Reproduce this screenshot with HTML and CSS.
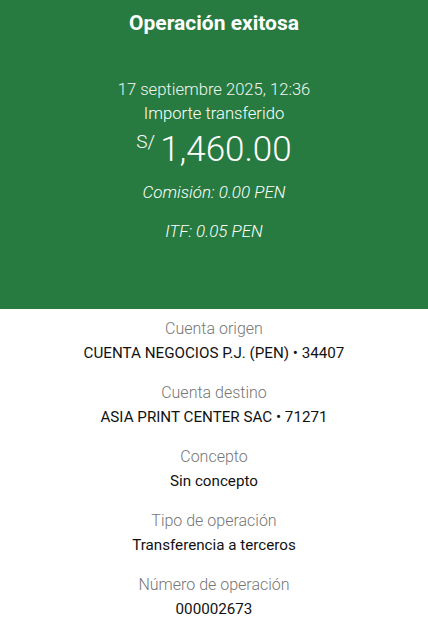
FILE: index.html
```html
<!DOCTYPE html>
<html lang="es">
<head>
<meta charset="utf-8">
<title>Operación exitosa</title>
<link rel="stylesheet" href="styles.css">
</head>
<body>
<header class="hero">
  <h1 class="title">Operación exitosa</h1>
  <p class="date">17 septiembre 2025, 12:36</p>
  <p class="caption">Importe transferido</p>
  <p class="amount"><span class="currency">S/</span><span class="value">1,460.00</span></p>
  <p class="fee">Comisión: 0.00 PEN</p>
  <p class="fee itf">ITF: 0.05 PEN</p>
</header>
<main class="details">
  <div class="item"><div class="label">Cuenta origen</div><div class="val">CUENTA NEGOCIOS P.J. (PEN) • 34407</div></div>
  <div class="item"><div class="label">Cuenta destino</div><div class="val">ASIA PRINT CENTER SAC • 71271</div></div>
  <div class="item"><div class="label">Concepto</div><div class="val">Sin concepto</div></div>
  <div class="item"><div class="label">Tipo de operación</div><div class="val">Transferencia a terceros</div></div>
  <div class="item"><div class="label">Número de operación</div><div class="val">000002673</div></div>
</main>
</body>
</html>
```
FILE: styles.css
```css
html, body {
  margin: 0;
  padding: 0;
  background: #ffffff;
  font-family: Roboto, "Liberation Sans", sans-serif;
}
.hero {
  background: #277b40;
  color: #ffffff;
  height: 309px;
  box-sizing: border-box;
  padding-top: 11px;
  text-align: center;
}
.hero p { margin: 0; }
.title {
  margin: 0;
  font-size: 21px;
  line-height: 24px;
  font-weight: 700;
}
.date {
  margin-top: 43px !important;
  font-size: 16.6px;
  line-height: 24px;
  font-weight: 300;
  color: #f1f6f2;
}
.caption {
  font-size: 16.6px;
  line-height: 24px;
  font-weight: 300;
}
.amount {
  display: flex;
  justify-content: center;
  align-items: flex-start;
  height: 40px;
  margin-top: 4px !important;
  font-weight: 300;
}
.currency {
  font-size: 19px;
  line-height: 24px;
  margin-right: 5px;
}
.value {
  font-size: 35px;
  line-height: 40px;
}
.fee {
  margin-top: 10px !important;
  font-size: 17px;
  line-height: 24px;
  font-style: italic;
  font-weight: 300;
}
.itf { margin-top: 15px !important; }
.details {
  padding-top: 8px;
  text-align: center;
  display: flex;
  flex-direction: column;
  gap: 16px;
}
.label {
  font-size: 16px;
  line-height: 24px;
  color: #767676;
  font-weight: 300;
}
.val {
  font-size: 15.2px;
  line-height: 24px;
  color: #121212;
  font-weight: 400;
}
```
